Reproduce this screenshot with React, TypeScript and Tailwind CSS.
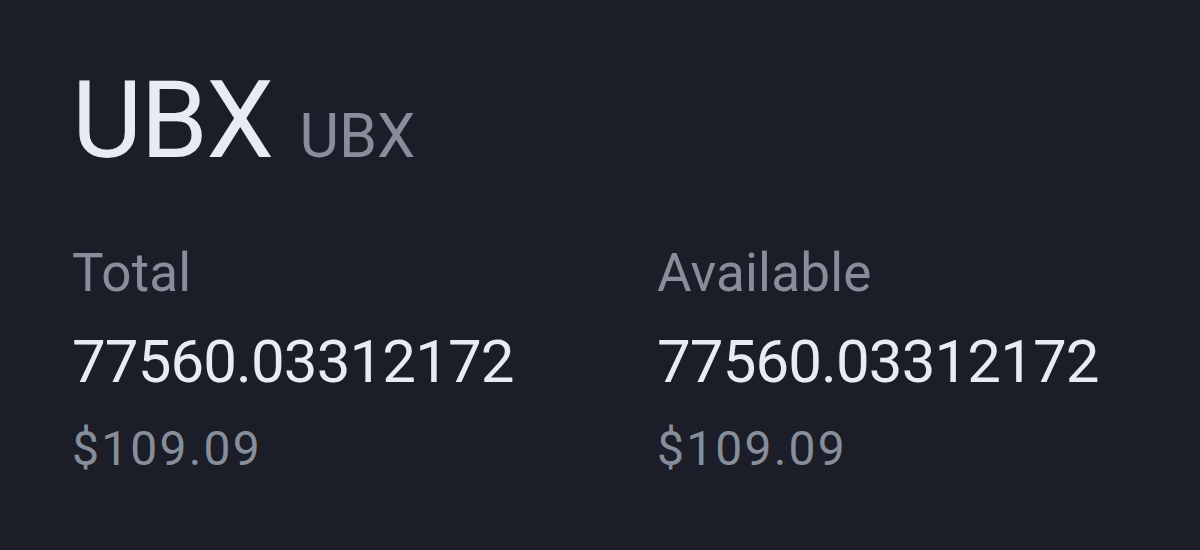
const rows = [
  { label: 'Total', amount: '77560.03312172', fiat: '$109.09' },
  { label: 'Available', amount: '77560.03312172', fiat: '$109.09' },
]

export default function App() {
  return (
    <div className="w-[1200px] h-[550px] bg-[#1b1e28] pl-[72px] pt-[66px] font-['Roboto',sans-serif] overflow-hidden">
      {/* Coin header */}
      <div className="flex items-baseline gap-[27px]">
        <h1 className="text-[108px] leading-none text-[#e7ebf5] tracking-[-1.5px]">UBX</h1>
        <span className="text-[61px] leading-none text-[#888e99]">UBX</span>
      </div>

      {/* Balances */}
      <div className="flex mt-[73px]">
        {rows.map((r, i) => (
          <div key={r.label} className={i === 0 ? 'w-[585px] shrink-0 flex flex-col' : 'flex-1 flex flex-col'}>
            <span className="text-[53px] leading-none text-[#888e99] tracking-[0.2px]">{r.label}</span>
            <span className="mt-[32px] text-[60px] leading-none text-[#e7ebf5] tracking-[-0.9px]">{r.amount}</span>
            <span className="mt-[33px] text-[48px] leading-none text-[#888e99] tracking-[2.2px]">{r.fiat}</span>
          </div>
        ))}
      </div>
    </div>
  )
}
